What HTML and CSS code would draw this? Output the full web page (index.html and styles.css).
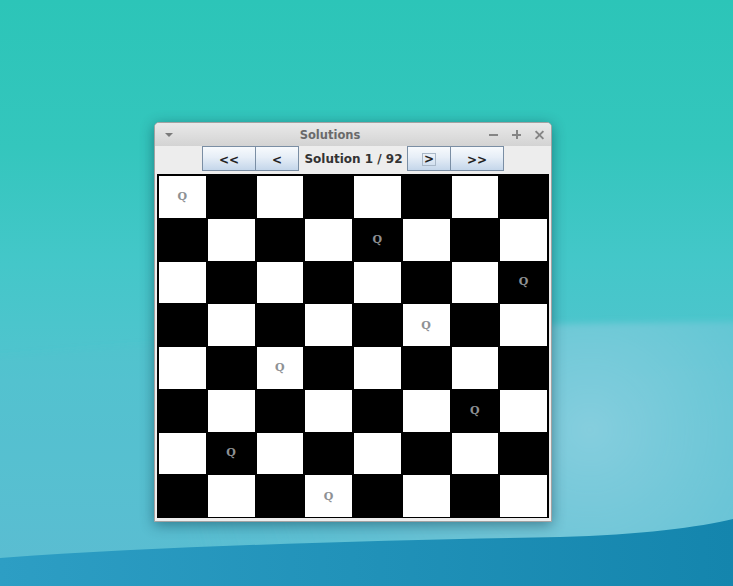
FILE: index.html
```html
<!DOCTYPE html>
<html>
<head>
<meta charset="utf-8">
<title>Solutions</title>
<link rel="stylesheet" href="styles.css">
</head>
<body>
<div class="desktop">
  <svg class="waves" width="733" height="586" viewBox="0 0 733 586" xmlns="http://www.w3.org/2000/svg">
    <defs>
      <radialGradient id="glow" cx="590" cy="430" r="430" gradientUnits="userSpaceOnUse">
        <stop offset="0" stop-color="#8ed0e0" stop-opacity="0.85"/>
        <stop offset="0.55" stop-color="#70c6d8" stop-opacity="0.45"/>
        <stop offset="1" stop-color="#5cbfd2" stop-opacity="0.1"/>
      </radialGradient>
      <linearGradient id="deep" x1="0" y1="0" x2="1" y2="0">
        <stop offset="0" stop-color="#2d9ec4"/>
        <stop offset="1" stop-color="#1485ad"/>
      </linearGradient>
      <filter id="soft" x="-10%" y="-10%" width="120%" height="120%">
        <feGaussianBlur stdDeviation="3"/>
      </filter>
    </defs>
    <path d="M-20 358 C 220 335, 470 322, 760 322 L760 600 L-20 600 Z" fill="url(#glow)" filter="url(#soft)"/>
    <path d="M0 558 C 180 545, 400 540, 560 537 C 640 535, 700 527, 733 519 L733 586 L0 586 Z" fill="url(#deep)"/>
  </svg>

  <div class="window">
    <div class="titlebar">
      <div class="tb-left"><span class="menu-tri"></span></div>
      <div class="tb-title">Solutions</div>
      <div class="tb-right">
        <span class="ctl ctl-min"></span>
        <span class="ctl ctl-max"></span>
        <span class="ctl ctl-close"></span>
      </div>
    </div>
    <div class="toolbar">
      <button class="btn btn-wide">&lt;&lt;</button>
      <button class="btn btn-narrow btn-join">&lt;</button>
      <span class="status">Solution 1 / 92</span>
      <button class="btn btn-narrow btn-focus"><span class="focus">&gt;</span></button>
      <button class="btn btn-wide btn-join">&gt;&gt;</button>
    </div>
    <div class="board" id="board">
      <div class="cell w"><span class="q">Q</span></div><div class="cell b"></div><div class="cell w"></div><div class="cell b"></div><div class="cell w"></div><div class="cell b"></div><div class="cell w"></div><div class="cell b"></div>
      <div class="cell b"></div><div class="cell w"></div><div class="cell b"></div><div class="cell w"></div><div class="cell b"><span class="q">Q</span></div><div class="cell w"></div><div class="cell b"></div><div class="cell w"></div>
      <div class="cell w"></div><div class="cell b"></div><div class="cell w"></div><div class="cell b"></div><div class="cell w"></div><div class="cell b"></div><div class="cell w"></div><div class="cell b"><span class="q">Q</span></div>
      <div class="cell b"></div><div class="cell w"></div><div class="cell b"></div><div class="cell w"></div><div class="cell b"></div><div class="cell w"><span class="q">Q</span></div><div class="cell b"></div><div class="cell w"></div>
      <div class="cell w"></div><div class="cell b"></div><div class="cell w"><span class="q">Q</span></div><div class="cell b"></div><div class="cell w"></div><div class="cell b"></div><div class="cell w"></div><div class="cell b"></div>
      <div class="cell b"></div><div class="cell w"></div><div class="cell b"></div><div class="cell w"></div><div class="cell b"></div><div class="cell w"></div><div class="cell b"><span class="q">Q</span></div><div class="cell w"></div>
      <div class="cell w"></div><div class="cell b"><span class="q">Q</span></div><div class="cell w"></div><div class="cell b"></div><div class="cell w"></div><div class="cell b"></div><div class="cell w"></div><div class="cell b"></div>
      <div class="cell b"></div><div class="cell w"></div><div class="cell b"></div><div class="cell w"><span class="q">Q</span></div><div class="cell b"></div><div class="cell w"></div><div class="cell b"></div><div class="cell w"></div>
    </div>
  </div>
</div>
</body>
</html>
```

FILE: styles.css
```css
* { box-sizing: border-box; }
html, body { margin: 0; padding: 0; }
body {
  width: 733px;
  height: 586px;
  overflow: hidden;
  font-family: "DejaVu Sans", sans-serif;
}
.desktop {
  position: relative;
  width: 733px;
  height: 586px;
  background: linear-gradient(180deg, #2cc5b8 0%, #34c6bd 25%, #44c7c9 45%, #52c3cf 65%, #5abcd2 100%);
  overflow: hidden;
}
.waves {
  position: absolute;
  left: 0;
  top: 0;
}
.window {
  position: absolute;
  left: 154px;
  top: 122px;
  width: 398px;
  height: 400px;
  background: #ededed;
  border: 1px solid #a2a2a2;
  border-radius: 5px 5px 0 0;
  box-shadow: 0 3px 14px rgba(0, 40, 60, 0.45);
  display: flex;
  flex-direction: column;
  padding: 0 2px 2px 2px;
}
.titlebar {
  height: 23px;
  margin: 0 -2px;
  display: flex;
  align-items: center;
  background: linear-gradient(180deg, #e9e9e9 0%, #dcdcdc 60%, #d3d3d3 100%);
  border-radius: 4px 4px 0 0;
}
.tb-left {
  width: 24px;
  display: flex;
  justify-content: center;
  padding-left: 3px;
}
.menu-tri {
  width: 0;
  height: 0;
  border-left: 4px solid transparent;
  border-right: 4px solid transparent;
  border-top: 4px solid #7a7a7a;
  margin-top: 1px;
}
.tb-title {
  flex: 1;
  text-align: center;
  font-weight: bold;
  font-size: 11.5px;
  color: #6a6a6a;
  padding-top: 1px;
}
.tb-right {
  width: 70px;
  display: flex;
  align-items: center;
  gap: 14px;
  padding-left: 8px;
}
.ctl {
  position: relative;
  width: 9px;
  height: 9px;
  display: block;
}
.ctl-min::before {
  content: "";
  position: absolute;
  left: 0;
  top: 4px;
  width: 9px;
  height: 2px;
  background: #858585;
}
.ctl-max::before, .ctl-max::after {
  content: "";
  position: absolute;
  background: #858585;
}
.ctl-max::before { left: 0; top: 4px; width: 9px; height: 2px; }
.ctl-max::after { left: 3.5px; top: 0; width: 2px; height: 9px; }
.ctl-close::before, .ctl-close::after {
  content: "";
  position: absolute;
  left: -1px;
  top: 4px;
  width: 11px;
  height: 2px;
  background: #858585;
}
.ctl-close::before { transform: rotate(45deg); }
.ctl-close::after { transform: rotate(-45deg); }

.toolbar {
  height: 25px;
  margin-bottom: 3px;
  display: flex;
  justify-content: center;
  align-items: stretch;
}
.btn {
  font-family: "DejaVu Sans", sans-serif;
  font-weight: bold;
  font-size: 12px;
  color: #222;
  border: 1px solid #7a8ea4;
  background: linear-gradient(180deg, #f7fafd 0%, #e6eef7 45%, #c4d6ea 100%);
  padding: 0;
  margin: 0;
  display: flex;
  align-items: center;
  justify-content: center;
  padding-top: 2px;
}
.btn-wide { width: 54px; }
.btn-narrow { width: 44px; }
.btn-join { margin-left: -1px; }
.status {
  width: 108px;
  display: flex;
  align-items: center;
  justify-content: center;
  font-weight: bold;
  font-size: 12px;
  color: #333333;
  padding-left: 1px;
}
.focus {
  border: 1px solid #a9b8c8;
  padding: 0 1px;
  line-height: 11px;
  height: 13px;
  display: inline-block;
}
.board {
  width: 392px;
  height: 344px;
  border: 1px solid #000;
  background: #000;
  display: grid;
  grid-template-columns: repeat(8, 1fr);
  grid-template-rows: repeat(8, 1fr);
}
.cell {
  display: flex;
  align-items: center;
  justify-content: center;
}
.cell.w { background: #ffffff; margin: 1px 1px 0 1px; }
.cell.b { background: #000000; }
.q {
  font-family: "DejaVu Serif", serif;
  font-weight: bold;
  font-size: 11px;
  color: #8e9194;
}
```
